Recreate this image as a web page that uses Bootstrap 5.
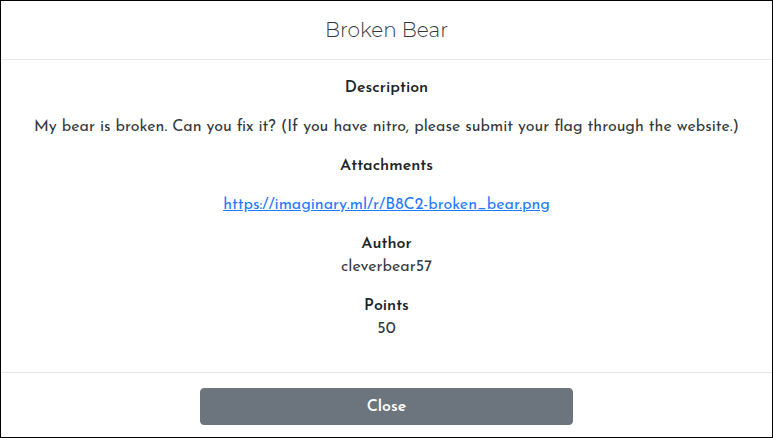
<!DOCTYPE html>
<html lang="en">
<head>
<meta charset="utf-8">
<meta name="viewport" content="width=device-width, initial-scale=1">
<title>Broken Bear</title>
<link href="https://cdn.jsdelivr.net/npm/bootstrap@5.3.0/dist/css/bootstrap.min.css" rel="stylesheet">
<style>
  body { font-family: "Josefin Sans", Lato, sans-serif; font-size: 16px; line-height: 23px; color: #33383d; }
  .challenge { border: 1px solid #000; }
  .challenge-head { padding: 16px; border-bottom: 1px solid #e6e8ea; }
  .challenge-title { font-family: Montserrat, Inter, sans-serif; font-size: 20px; line-height: 26px; font-weight: 300; }
  .challenge-body { padding: 17px 16px 15px; }
  .challenge-foot { padding: 15px 12px 12px; border-top: 1px solid #e3e6e8; }
  .challenge strong { font-weight: 600; color: #212529; }
  .challenge a { color: #1f7aff; }
  .btn-close-challenge { padding: 7px 12px 5px; font-size: 16px; line-height: 23px; border-radius: 4px; font-weight: 600; }
</style>
</head>
<body class="bg-white">
<main class="challenge min-vh-100 d-flex flex-column text-center">
  <header class="challenge-head">
    <h1 class="challenge-title mb-0">Broken Bear</h1>
  </header>
  <section class="challenge-body flex-grow-1">
    <p class="mb-3"><strong>Description</strong></p>
    <p class="mb-3">My bear is broken. Can you fix it? (If you have nitro, please submit your flag through the website.)</p>
    <p class="mb-3"><strong>Attachments</strong></p>
    <p class="mb-3"><a href="https://imaginary.ml/r/B8C2-broken_bear.png">https://imaginary.ml/r/B8C2-broken_bear.png</a></p>
    <p class="mb-3"><strong>Author</strong><br>cleverbear57</p>
    <p class="mb-3"><strong>Points</strong><br>50</p>
  </section>
  <footer class="challenge-foot">
    <button type="button" class="btn btn-secondary btn-close-challenge w-50">Close</button>
  </footer>
</main>
<script src="https://cdn.jsdelivr.net/npm/bootstrap@5.3.0/dist/js/bootstrap.bundle.min.js"></script>
</body>
</html>
